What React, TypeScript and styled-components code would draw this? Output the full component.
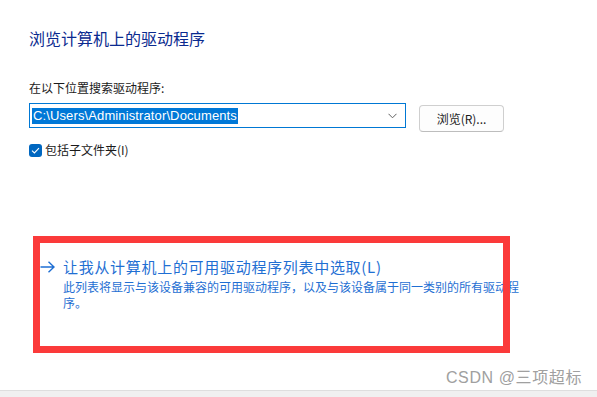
import React from "react";
import styled, { createGlobalStyle } from "styled-components";

const Global = createGlobalStyle`
  html, body { margin: 0; padding: 0; background: #ffffff; }
  body { font-family: "Liberation Sans", "Noto Sans CJK SC", sans-serif; }
  * { box-sizing: border-box; }
`;

const Page = styled.div`
  position: relative;
  width: 597px;
  height: 397px;
  overflow: hidden;
  display: flex;
  flex-direction: column;
  background: #ffffff;
`;

const Content = styled.div`
  flex: 1;
  display: flex;
  flex-direction: column;
  padding: 27px 0 0 29px;
`;

const Title = styled.h1`
  margin: 0;
  font-family: "Noto Sans CJK SC", sans-serif;
  font-weight: 400;
  font-size: 16px;
  line-height: 22px;
  color: #0a2a8f;
`;

const Label = styled.div`
  margin-top: 31px;
  font-family: "Noto Sans CJK SC", sans-serif;
  font-size: 12px;
  line-height: 16px;
  color: #1a1a1a;
`;

const PathRow = styled.div`
  margin-top: 7px;
  display: flex;
  align-items: flex-start;
  gap: 13px;
`;

const Combo = styled.div`
  width: 377px;
  height: 25px;
  border: 1px solid #0078d4;
  display: flex;
  align-items: center;
  padding: 0 8px 0 2px;
`;

const Selected = styled.span`
  background: #0078d7;
  color: #ffffff;
  font-family: "Liberation Sans", sans-serif;
  font-size: 13px;
  letter-spacing: 0.12px;
  line-height: 16px;
  padding: 0 1px;
  white-space: nowrap;
`;

const Chevron = styled.svg`
  margin-left: auto;
  width: 9px;
  height: 6px;
`;

const Button = styled.button`
  margin-top: 2px;
  width: 85px;
  height: 27px;
  border: 1px solid #cfcfcf;
  border-bottom-color: #bdbdbd;
  border-radius: 4px;
  background: #fdfdfd;
  font-family: "Noto Sans CJK SC", sans-serif;
  font-size: 12px;
  color: #1a1a1a;
  padding: 0;
`;

const CheckRow = styled.label`
  margin-top: 10px;
  display: flex;
  align-items: center;
  gap: 3px;
  font-family: "Noto Sans CJK SC", sans-serif;
  font-size: 12px;
  line-height: 16px;
  color: #1a1a1a;
`;

const CheckBox = styled.span`
  width: 13px;
  height: 13px;
  border-radius: 3px;
  background: #0067c0;
  display: inline-flex;
  align-items: center;
  justify-content: center;
`;

const Spacer = styled.div`
  flex: 1;
`;

const Option = styled.div`
  margin-left: 11px;
  margin-bottom: 79px;
  display: flex;
  align-items: flex-start;
  gap: 8px;
`;

const ArrowIcon = styled.svg`
  width: 15px;
  height: 12px;
  margin-top: 4px;
  flex-shrink: 0;
`;

const OptionText = styled.div`
  display: flex;
  flex-direction: column;
  gap: 2px;
`;

const OptionTitle = styled.div`
  font-family: "Noto Sans CJK SC", sans-serif;
  font-size: 15px;
  letter-spacing: 0.7px;
  line-height: 20px;
  color: #1f6fd3;
`;

const OptionDesc = styled.div`
  width: 460px;
  font-family: "Noto Sans CJK SC", sans-serif;
  font-size: 12px;
  line-height: 16px;
  color: #1f6fd3;
`;

const Footer = styled.div`
  height: 7px;
  background: #f0f0f0;
  border-top: 1px solid #dedede;
`;

const Highlight = styled.div`
  position: absolute;
  left: 33px;
  top: 236px;
  width: 477px;
  height: 117px;
  border: 7px solid #fb3a3a;
  pointer-events: none;
`;

const Watermark = styled.div`
  position: absolute;
  right: 15px;
  bottom: 10px;
  font-family: "Liberation Sans", "Noto Sans CJK SC", sans-serif;
  font-size: 16px;
  letter-spacing: 0.6px;
  line-height: 18px;
  color: #a0a0a0;
`;

export default function App() {
  return (
    <>
      <Global />
      <Page>
        <Content>
          <Title>浏览计算机上的驱动程序</Title>
          <Label>在以下位置搜索驱动程序:</Label>
          <PathRow>
            <Combo>
              <Selected>C:\Users\Administrator\Documents</Selected>
              <Chevron viewBox="0 0 9 6">
                <path d="M0.5 0.8 L4.5 4.8 L8.5 0.8" fill="none" stroke="#606060" strokeWidth="1" />
              </Chevron>
            </Combo>
            <Button>浏览(R)...</Button>
          </PathRow>
          <CheckRow>
            <CheckBox>
              <svg width="9" height="7" viewBox="0 0 9 7">
                <path d="M1 3.6 L3.4 6 L8 1.2" fill="none" stroke="#ffffff" strokeWidth="1.1" />
              </svg>
            </CheckBox>
            包括子文件夹(I)
          </CheckRow>
          <Spacer />
          <Option>
            <ArrowIcon viewBox="0 0 15 12">
              <path d="M0.5 6 H14 M8.5 0.8 L14 6 L8.5 11.2" fill="none" stroke="#1f6fd3" strokeWidth="1.4" />
            </ArrowIcon>
            <OptionText>
              <OptionTitle>让我从计算机上的可用驱动程序列表中选取(L)</OptionTitle>
              <OptionDesc>
                此列表将显示与该设备兼容的可用驱动程序，以及与该设备属于同一类别的所有驱动程序。
              </OptionDesc>
            </OptionText>
          </Option>
        </Content>
        <Footer />
        <Highlight />
        <Watermark>CSDN @三项超标</Watermark>
      </Page>
    </>
  );
}
